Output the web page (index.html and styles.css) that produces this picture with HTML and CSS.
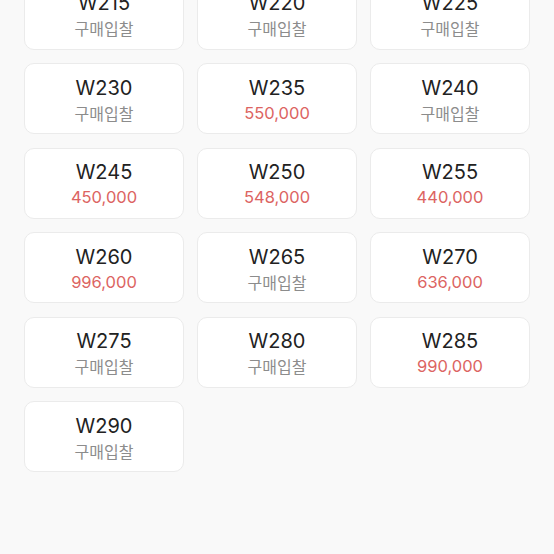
FILE: index.html
```html
<!DOCTYPE html>
<html lang="ko">
<head>
  <meta charset="UTF-8">
  <meta name="viewport" content="width=device-width, initial-scale=1.0">
  <title>사이즈 선택</title>
  <link rel="stylesheet" href="styles.css">
</head>
<body>
  <div class="size-grid">
    <div class="size-card"><div class="size">W215</div><div class="price bid">구매입찰</div></div>
    <div class="size-card"><div class="size">W220</div><div class="price bid">구매입찰</div></div>
    <div class="size-card"><div class="size">W225</div><div class="price bid">구매입찰</div></div>
    <div class="size-card"><div class="size">W230</div><div class="price bid">구매입찰</div></div>
    <div class="size-card"><div class="size">W235</div><div class="price">550,000</div></div>
    <div class="size-card"><div class="size">W240</div><div class="price bid">구매입찰</div></div>
    <div class="size-card"><div class="size">W245</div><div class="price">450,000</div></div>
    <div class="size-card"><div class="size">W250</div><div class="price">548,000</div></div>
    <div class="size-card"><div class="size">W255</div><div class="price">440,000</div></div>
    <div class="size-card"><div class="size">W260</div><div class="price">996,000</div></div>
    <div class="size-card"><div class="size">W265</div><div class="price bid">구매입찰</div></div>
    <div class="size-card"><div class="size">W270</div><div class="price">636,000</div></div>
    <div class="size-card"><div class="size">W275</div><div class="price bid">구매입찰</div></div>
    <div class="size-card"><div class="size">W280</div><div class="price bid">구매입찰</div></div>
    <div class="size-card"><div class="size">W285</div><div class="price">990,000</div></div>
    <div class="size-card"><div class="size">W290</div><div class="price bid">구매입찰</div></div>
  </div>
</body>
</html>
```

FILE: styles.css
```css
html, body {
  height: 100%;
  overflow: hidden;
}
body {
  margin: 0;
  background: #f9f9f9;
  font-family: Inter, 'Noto Sans CJK KR', sans-serif;
}
.size-grid {
  display: grid;
  grid-template-columns: repeat(3, 160px);
  column-gap: 13px;
  row-gap: 13.5px;
  padding: 0 24px;
  margin-top: -21.5px;
}
.size-card {
  height: 71px;
  box-sizing: border-box;
  padding-top: 2px;
  background: #fff;
  border: 1px solid #ebebeb;
  border-radius: 10px;
  display: flex;
  flex-direction: column;
  align-items: center;
  justify-content: center;
  gap: 2px;
}
.size {
  font-size: 20px;
  line-height: 24px;
  color: #222;
}
.price {
  font-size: 16.5px;
  line-height: 22px;
  color: #dc6462;
}
.price.bid {
  font-family: 'Noto Sans CJK KR', sans-serif;
  font-size: 16px;
  color: #8c8c8c;
}
```
